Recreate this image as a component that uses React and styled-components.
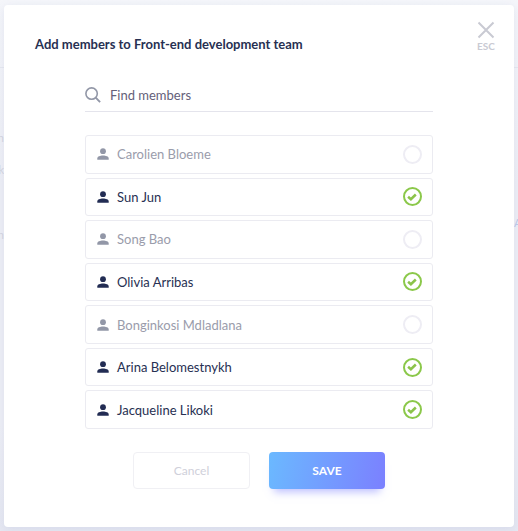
import React, { useState } from "react";
import styled, { createGlobalStyle } from "styled-components";

const GlobalStyle = createGlobalStyle`
  *, *::before, *::after { box-sizing: border-box; }
  body {
    margin: 0;
    background: #f3f4f9;
    color: #273052;
    font-family: "Lato", "Open Sans", sans-serif;
    font-size: 13px;
    line-height: 18px;
  }
  button, input { font: inherit; color: inherit; }
`;

const Page = styled.div`
  position: relative;
  min-height: 100vh;
  padding: 5px 4px 4px;
  display: flex;
  overflow: hidden;
  background: linear-gradient(#f5f6fa, #eeeff6 35%, #eeeff6 80%, #e6e8f2);
`;

const Backdrop = styled.div`
  position: absolute;
  inset: 67px 0 0;
  border-top: 1px solid #e6e8f0;
`;

const BackdropText = styled.span`
  position: absolute;
  top: ${(p) => p.$top}px;
  ${(p) => (p.$right ? "left: calc(100% - 4px)" : "right: calc(100% - 4px)")};
  font-size: 11px;
  line-height: 16px;
  color: ${(p) => (p.$right ? "#bccbea" : "#d5d6e1")};
`;

const Dialog = styled.section`
  position: relative;
  flex: 1;
  padding: 15px 19px 38px 31px;
  border-radius: 4px;
  background: #fff;
  box-shadow: 0 2px 10px rgba(116, 124, 184, 0.14);
`;

const Header = styled.header`
  display: flex;
  justify-content: space-between;
  align-items: flex-start;
`;

const Title = styled.h1`
  margin: 15px 0 0;
  font-size: 13px;
  line-height: 18px;
  font-weight: 700;
`;

const CloseButton = styled.button`
  display: flex;
  flex-direction: column;
  align-items: center;
  gap: 1px;
  padding: 1px 0 0;
  border: 0;
  background: none;
  color: #c9cad3;
  font-size: 10px;
  line-height: 12px;
  font-weight: 700;
  cursor: pointer;
  svg { display: block; }
`;

const Form = styled.form`
  max-width: 348px;
  margin: 26px auto 0;
`;

const Body = styled.div`
  padding-right: 12px;
`;

const SearchField = styled.label`
  display: flex;
  align-items: center;
  gap: 9px;
  height: 33px;
  border-bottom: 1px solid #e4e4ec;
  color: #9297a7;
  svg { flex: none; }
`;

const SearchInput = styled.input`
  flex: 1;
  min-width: 0;
  padding: 0;
  border: 0;
  outline: 0;
  background: none;
  font-size: 13px;
  color: #646079;
  &::placeholder { color: #646079; opacity: 1; }
`;

const MemberList = styled.ul`
  display: grid;
  grid-auto-rows: 1fr;
  gap: 4px;
  min-height: 294px;
  margin: 23px 0 0;
  padding: 0;
  list-style: none;
`;

const MemberRow = styled.label`
  display: flex;
  align-items: center;
  gap: 8px;
  height: 100%;
  padding: 0 10px 0 11px;
  border: 1px solid #ebebf1;
  border-radius: 3px;
  color: ${(p) => (p.$selected ? "#273052" : "#9a9cab")};
  cursor: pointer;
  > svg { flex: none; color: ${(p) => (p.$selected ? "#222c53" : "#9297a7")}; }
`;

const MemberName = styled.span`
  flex: 1;
`;

const CheckSlot = styled.span`
  display: grid;
  width: 20px;
  height: 20px;
  place-items: center;
  > * { grid-area: 1 / 1; }
  svg { pointer-events: none; color: #8bc34a; }
`;

const Check = styled.input`
  appearance: none;
  width: 19px;
  height: 19px;
  margin: 0;
  border: 2px solid #eeedf4;
  border-radius: 50%;
  cursor: pointer;
  &:checked { border-color: #8bc84a; }
`;

const Actions = styled.div`
  display: flex;
  justify-content: center;
  gap: 19px;
  margin-top: 23px;
`;

const Button = styled.button`
  width: 116px;
  height: 37px;
  padding: 0;
  border-radius: 4px;
  font-size: 12px;
  cursor: pointer;
`;

const CancelButton = styled(Button)`
  width: 117px;
  border: 1px solid #f0f0f4;
  background: #fff;
  color: #cfd0da;
`;

const SaveButton = styled(Button)`
  border: 0;
  background: linear-gradient(100deg, #6bb9ff, #7b80ff);
  box-shadow: 0 8px 8px -5px rgba(123, 128, 255, 0.5);
  color: #fff;
  font-weight: 700;
`;

const CloseIcon = () => (
  <svg width="18" height="18" viewBox="0 0 18 18" fill="none" stroke="currentColor" strokeWidth="2" aria-hidden="true">
    <path d="M1.5 1.5l15 15M16.5 1.5l-15 15" />
  </svg>
);

const SearchIcon = () => (
  <svg width="16" height="16" viewBox="0 0 16 16" fill="none" stroke="currentColor" strokeWidth="1.6" aria-hidden="true">
    <circle cx="6.6" cy="6.6" r="5.7" />
    <path d="M10.7 10.7l4.4 4.5" strokeWidth="1.9" />
  </svg>
);

const PersonIcon = () => (
  <svg width="12" height="12" viewBox="0 0 12 12" fill="currentColor" aria-hidden="true">
    <circle cx="6" cy="3.2" r="2.9" />
    <path d="M.3 11.8V10.4C.3 8.6 3.2 7.6 6 7.6s5.7 1 5.7 2.8v1.4z" />
  </svg>
);

const CheckIcon = () => (
  <svg width="10" height="8" viewBox="0 0 10 8" fill="none" stroke="currentColor" strokeWidth="2.5" aria-hidden="true">
    <path d="M1.1 3.7l2.8 2.5 4.9-4.7" />
  </svg>
);

const members = [
  { name: "Carolien Bloeme", selected: false },
  { name: "Sun Jun", selected: true },
  { name: "Song Bao", selected: false },
  { name: "Olivia Arribas", selected: true },
  { name: "Bonginkosi Mdladlana", selected: false },
  { name: "Arina Belomestnykh", selected: true },
  { name: "Jacqueline Likoki", selected: true },
];

function Member({ name, selected }) {
  const [checked, setChecked] = useState(selected);
  return (
    <li>
      <MemberRow $selected={checked}>
        <PersonIcon />
        <MemberName>{name}</MemberName>
        <CheckSlot>
          <Check type="checkbox" checked={checked} onChange={(e) => setChecked(e.target.checked)} />
          {checked && <CheckIcon />}
        </CheckSlot>
      </MemberRow>
    </li>
  );
}

export default function App() {
  return (
    <>
      <GlobalStyle />
      <Page>
        <Backdrop aria-hidden="true">
          <BackdropText $top={62}>n</BackdropText>
          <BackdropText $top={94}>k</BackdropText>
          <BackdropText $top={159}>n</BackdropText>
          <BackdropText $top={147} $right>A</BackdropText>
        </Backdrop>
        <Dialog role="dialog" aria-labelledby="dialog-title">
          <Header>
            <Title id="dialog-title">Add members to Front-end development team</Title>
            <CloseButton type="button" aria-label="Close, ESC">
              <CloseIcon />
              ESC
            </CloseButton>
          </Header>
          <Body>
            <Form onSubmit={(e) => e.preventDefault()}>
              <SearchField>
                <SearchIcon />
                <SearchInput type="text" aria-label="Find members" placeholder="Find members" />
              </SearchField>
              <MemberList>
                {members.map((m) => (
                  <Member key={m.name} {...m} />
                ))}
              </MemberList>
              <Actions>
                <CancelButton type="button">Cancel</CancelButton>
                <SaveButton type="submit">SAVE</SaveButton>
              </Actions>
            </Form>
          </Body>
        </Dialog>
      </Page>
    </>
  );
}
